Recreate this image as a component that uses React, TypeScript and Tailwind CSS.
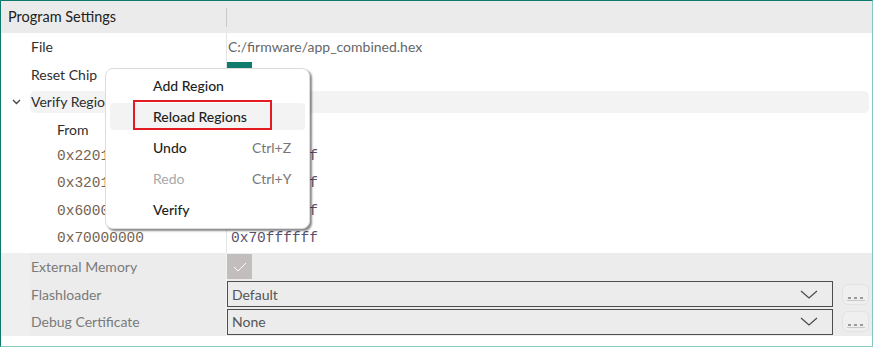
import React from 'react'

const FONT = { fontFamily: 'Lato, "Noto Sans", sans-serif' }

function Chevron({ className }: { className?: string }) {
  return (
    <svg width="18" height="9" viewBox="0 0 18 9" className={className}>
      <path d="M1 1 L9 8 L17 1" fill="none" stroke="#4a4a4a" strokeWidth="1.2" />
    </svg>
  )
}

function Row({ label, indent = 30, children, mono = false }: { label: string; indent?: number; children?: React.ReactNode; mono?: boolean }) {
  return (
    <div className="flex h-[27.5px] items-center">
      <div className="w-[225px] h-full flex items-center" style={{ paddingLeft: indent }}>
        <span className={mono ? 'font-["Liberation_Mono",monospace] text-[14.5px] text-[#76634f]' : 'text-[14px] text-[#2e2e2e]'}>{label}</span>
      </div>
      <div className="flex-1 h-full flex items-center border-l border-[#e4e4e4]">{children}</div>
    </div>
  )
}

function DisabledRow({ label, children }: { label: string; children?: React.ReactNode }) {
  return (
    <div className="flex h-[27.5px] items-center bg-[#ececec]">
      <div className="w-[29px] h-full bg-[#efefef]" />
      <div className="w-[196px] h-full flex items-center pl-[1px]">
        <span className="text-[14px] text-[#7a7a7a]">{label}</span>
      </div>
      <div className="flex-1 h-full flex items-center border-l border-[#f4f4f4]">{children}</div>
    </div>
  )
}

function Combo({ value }: { value: string }) {
  return (
    <div className="flex items-center w-full h-full">
      <div className="w-[606px] h-[26px] border border-[#4d4d4d] bg-[#ececec] flex items-center justify-between pl-[4px] pr-[14px]">
        <span className="text-[14px] text-[#555]">{value}</span>
        <Chevron />
      </div>
      <div className="ml-[9px] w-[27px] h-[21px] rounded-[6px] border border-[#e2e2e2] bg-[#efefef] flex items-end justify-center pb-[3px]">
        <div className="flex flex-col items-center">
          <div className="flex gap-[3px]">
            <span className="w-[3px] h-[2px] bg-[#9a9a9a]" />
            <span className="w-[3px] h-[2px] bg-[#9a9a9a]" />
            <span className="w-[3px] h-[2px] bg-[#9a9a9a]" />
          </div>
          <div className="w-[18px] h-[1px] bg-[#c8c8c8] mt-[1px]" />
        </div>
      </div>
    </div>
  )
}

function MenuItem({ label, shortcut, disabled, hover, marked }: { label: string; shortcut?: string; disabled?: boolean; hover?: boolean; marked?: boolean }) {
  return (
    <div className="h-[31px] px-[4px] flex items-center relative">
      <div className={'w-full h-[27px] rounded-[4px] flex items-center ' + (hover ? 'bg-[#f3f3f3]' : '')}>
        <span className={'ml-[43px] w-[99px] text-[14px] ' + (disabled ? 'text-[#a8a8a8]' : 'text-[#1e1e1e] font-medium')}>{label}</span>
        {shortcut && <span className="text-[14px] text-[#777]">{shortcut}</span>}
      </div>
      {marked && <div className="absolute left-[27px] top-[-1px] w-[139px] h-[30px] border-2 border-[#e31b23]" />}
    </div>
  )
}

export default function App() {
  const hex: [string, string][] = [
    ['0x22010000', '0x2201ffff'],
    ['0x32010000', '0x3201ffff'],
    ['0x60000000', '0x60ffffff'],
    ['0x70000000', '0x70ffffff'],
  ]
  return (
    <div style={FONT} className="relative w-[873px] h-[347px] bg-white border border-t-[#0e7a6c] border-l-[#0e7a6c] border-r-[#86c9be] border-b-[#86c9be] overflow-hidden">
      {/* header */}
      <div className="h-[32px] bg-[#ebebeb] flex items-center">
        <div className="w-[225px] pl-[7px] text-[14.5px] text-[#222]">Program Settings</div>
        <div className="w-[1px] h-[19px] bg-[#c9c9c9]" />
      </div>

      <Row label="File">
        <span className="pl-[1px] text-[14px] text-[#666]">C:/firmware/app_combined.hex</span>
      </Row>
      <Row label="Reset Chip">
        <div className="w-[25px] h-[25px] bg-[#0f7b6d]" />
      </Row>
      <div className="flex h-[27.5px] items-center">
        <div className="w-[29px] flex justify-center pl-[1px]">
          <svg width="9" height="6" viewBox="0 0 9 6">
            <path d="M1 1 L4.5 4.5 L8 1" fill="none" stroke="#444" strokeWidth="1.3" />
          </svg>
        </div>
        <div className="flex-1 mr-[3px] h-[22px] rounded-[5px] bg-[#f3f3f3] flex items-center pl-[1px]">
          <span className="text-[14px] text-[#2e2e2e]">Verify Regions</span>
        </div>
      </div>
      <Row label="From" indent={56} />
      {hex.map(([a, b]) => (
        <Row key={a} label={a} indent={56} mono>
          <span className='pl-[4px] font-["Liberation_Mono",monospace] text-[14.5px] text-[#58506e]'>{b}</span>
        </Row>
      ))}
      <DisabledRow label="External Memory">
        <div className="w-[25px] h-[25px] bg-[#c2bebe] flex items-center justify-center">
          <svg width="14" height="10" viewBox="0 0 14 10">
            <path d="M1 5 L5 9 L13 1" fill="none" stroke="#fff" strokeWidth="1" />
          </svg>
        </div>
      </DisabledRow>
      <DisabledRow label="Flashloader">
        <Combo value="Default" />
      </DisabledRow>
      <DisabledRow label="Debug Certificate">
        <Combo value="None" />
      </DisabledRow>

      {/* context menu */}
      <div className="absolute left-[104px] top-[67px] w-[205px] bg-white border border-[#dcdcdc] rounded-[8px] pt-[1px] pb-[3px] shadow-[2px_2px_2px_rgba(0,0,0,0.45)]">
        <MenuItem label="Add Region" />
        <MenuItem label="Reload Regions" hover marked />
        <MenuItem label="Undo" shortcut="Ctrl+Z" />
        <MenuItem label="Redo" shortcut="Ctrl+Y" disabled />
        <MenuItem label="Verify" />
      </div>
    </div>
  )
}
